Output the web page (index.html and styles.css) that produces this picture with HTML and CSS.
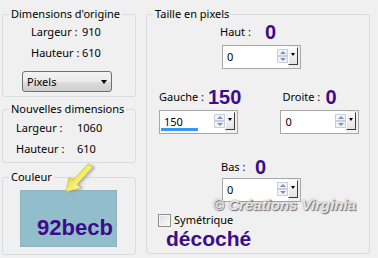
FILE: index.html
```html
<!DOCTYPE html>
<html lang="fr">
<head>
<meta charset="utf-8">
<title>Taille de la toile</title>
<link rel="stylesheet" href="styles.css">
</head>
<body>
<div class="dialog">
  <div class="leftcol">
    <fieldset class="grp g1">
      <legend>Dimensions d'origine</legend>
      <div class="orow r1"><span class="olab w51">Largeur :</span><span>910</span></div>
      <div class="orow r2"><span class="olab w47">Hauteur :</span><span>610</span></div>
      <div class="select"><span>Pixels</span><span class="caret"></span></div>
    </fieldset>
    <fieldset class="grp g2">
      <legend>Nouvelles dimensions</legend>
      <div class="ngrid">
        <span>Largeur :</span><span>1060</span>
        <span>Hauteur :</span><span>610</span>
      </div>
    </fieldset>
    <fieldset class="grp g3">
      <legend>Couleur</legend>
      <div class="swatch">92becb</div>
    </fieldset>
  </div>

  <fieldset class="grp right">
    <legend>Taille en pixels</legend>
    <div class="rbody">
      <div class="cell haut">
        <div class="lrow"><span class="lab lw45">Haut :</span><span class="big">0</span></div>
        <div class="spin sp2">
          <div class="field">0<div class="arrows"><span class="arr up"></span><span class="arr down"></span></div></div>
          <div class="side"><span class="btn"></span></div>
        </div>
      </div>

      <div class="pair">
        <div class="cell gauche">
          <div class="lrow"><span class="lab lw49">Gauche :</span><span class="big">150</span></div>
          <div class="spin">
            <div class="field">150<span class="bar"></span><div class="arrows"><span class="arr up"></span><span class="arr down"></span></div></div>
            <div class="side"><span class="btn"></span></div>
          </div>
        </div>
        <div class="cell droite">
          <div class="lrow lr2"><span class="lab lw43">Droite :</span><span class="big">0</span></div>
          <div class="spin">
            <div class="field">0<div class="arrows"><span class="arr up"></span><span class="arr down"></span></div></div>
            <div class="side"><span class="btn"></span></div>
          </div>
        </div>
      </div>

      <div class="cell bas">
        <div class="lrow"><span class="lab lw34">Bas :</span><span class="big">0</span></div>
        <div class="spin sp1">
          <div class="field">0<div class="arrows"><span class="arr up"></span><span class="arr down"></span></div></div>
          <div class="side"><span class="btn"></span></div>
        </div>
      </div>

      <div class="check"><span class="box"></span><span>Symétrique</span></div>
      <div class="state">décoché</div>

      <div class="watermark">© Créations Virginia</div>
    </div>
  </fieldset>

  <svg class="pointer" width="44" height="44" viewBox="0 0 44 44">
    <defs>
      <linearGradient id="yel" x1="0" y1="0" x2="0" y2="1">
        <stop offset="0" stop-color="#fdfab0"/>
        <stop offset="0.5" stop-color="#f4ee6c"/>
        <stop offset="1" stop-color="#e2d53a"/>
      </linearGradient>
      <filter id="blur" x="-30%" y="-30%" width="160%" height="160%">
        <feGaussianBlur stdDeviation="1.2"/>
      </filter>
    </defs>
    <g transform="translate(11,34) rotate(132.8)">
      <polygon points="0,0 -13,-8 -13,-2.8 -36,-2.8 -36,2.8 -13,2.8 -13,8" fill="#6e6e6e" opacity="0.45" filter="url(#blur)" transform="translate(-1.5,-2.5)"/>
      <polygon points="0,0 -13,-8 -13,-2.8 -36,-2.8 -36,2.8 -13,2.8 -13,8" fill="url(#yel)" stroke="#c3b735" stroke-width="0.6"/>
    </g>
  </svg>
</div>
</body>
</html>
```

FILE: styles.css
```css
body {
  margin: 0;
  background: #f0f0f0;
  font-family: "Noto Sans", sans-serif;
  font-size: 11px;
  line-height: 14px;
  color: #000;
}

.dialog {
  position: relative;
  display: flex;
  align-items: flex-start;
  gap: 10px;
  padding: 7px 0 0 2px;
}

.leftcol {
  width: 134px;
  display: flex;
  flex-direction: column;
}

.grp {
  margin: 0;
  padding: 0;
  min-width: 0;
  border: 1px solid #d8dcdf;
  border-radius: 3px;
}

.grp > legend {
  padding: 0 2px;
  margin-left: 6px;
  line-height: 14px;
}

/* Dimensions d'origine */
.g1 { padding-bottom: 4px; }
.orow { padding-left: 28px; height: 14px; white-space: nowrap; }
.r1 { margin-top: 4px; }
.r2 { margin-top: 7px; }
.olab { display: inline-block; }
.w51 { width: 51px; }
.w47 { width: 51px; }

.select {
  margin: 11px 0 0 19px;
  width: 90px;
  height: 21px;
  box-sizing: border-box;
  border: 1px solid #707070;
  border-radius: 3px;
  background: linear-gradient(#f3f3f3, #ebebeb 50%, #dddddd 50%, #cfcfcf);
  display: flex;
  align-items: center;
  justify-content: space-between;
  padding: 0 4px 0 4px;
}
.caret {
  width: 0;
  height: 0;
  border-left: 3.5px solid transparent;
  border-right: 3.5px solid transparent;
  border-top: 4px solid #000;
}

/* Nouvelles dimensions */
.g2 { margin-top: 5px; }
.ngrid {
  display: grid;
  grid-template-columns: 61px auto;
  row-gap: 7px;
  padding: 5px 0 6px 13px;
}

/* Couleur */
.g3 { margin-top: 7px; padding-bottom: 7px; }
.swatch {
  margin: 6px 0 0 17px;
  width: 97px;
  height: 57px;
  box-sizing: border-box;
  border: 1px solid #8fb3bf;
  background: #92becb;
  padding: 25px 0 0 16px;
  font-family: "Liberation Sans", Arial, sans-serif;
  font-weight: bold;
  font-size: 22px;
  line-height: 24px;
  color: #3d0c8a;
}

/* Taille en pixels */
.right {
  width: 224px;
  box-sizing: border-box;
  padding-bottom: 3px;
}
.rbody {
  position: relative;
  display: flex;
  flex-direction: column;
  align-items: flex-start;
}
.lrow {
  display: flex;
  align-items: center;
  height: 22px;
  white-space: nowrap;
}
.lab { display: inline-block; }
.lw45 { width: 45px; }
.lw49 { width: 49px; }
.lw43 { width: 43px; }
.lw34 { width: 34px; }
.big {
  font-family: "Liberation Sans", Arial, sans-serif;
  font-weight: bold;
  font-size: 20px;
  line-height: 22px;
  color: #3d0c8a;
}

.haut { margin-left: 73px; }
.sp2 { margin-left: 2px; }
.bas { margin-left: 74px; margin-top: 22px; }
.sp1 { margin-left: 1px; }

.pair {
  display: flex;
  gap: 39px;
  margin: 17px 0 0 12px;
}
.lr2 { margin-left: 2px; }

.spin {
  display: flex;
  width: 79px;
  height: 24px;
  box-sizing: border-box;
  border: 1px solid #a7a7a7;
  background: #fff;
  margin-top: 2px;
}
.bas .spin { margin-top: 0; }
.field {
  position: relative;
  flex: 1;
  display: flex;
  align-items: center;
  justify-content: space-between;
  padding-left: 4px;
}
.bar {
  position: absolute;
  left: 1px;
  top: 17px;
  width: 37px;
  height: 3px;
  background: #3399f4;
}
.arrows {
  display: flex;
  flex-direction: column;
  width: 11px;
  margin-top: -3px;
}
.arr {
  position: relative;
  height: 7px;
  box-sizing: border-box;
  border: 1px solid #c9ced8;
  background: #f2f4f8;
}
.arr::after {
  content: "";
  position: absolute;
  left: 1.5px;
  width: 0;
  height: 0;
  border-left: 3px solid transparent;
  border-right: 3px solid transparent;
}
.up::after { top: 1px; border-bottom: 3px solid #7d8fc4; }
.down::after { top: 1px; border-top: 3px solid #7d8fc4; }

.side {
  width: 12px;
  background: #f0f0f0;
  display: flex;
  align-items: flex-start;
}
.btn {
  position: relative;
  width: 10px;
  height: 18px;
  margin-top: 1px;
  box-sizing: border-box;
  border-top: 1px solid #fff;
  border-left: 1px solid #fff;
  border-right: 1px solid #3a3a3a;
  border-bottom: 1px solid #3a3a3a;
  background: linear-gradient(#fafafa, #e4e4e4);
}
.btn::after {
  content: "";
  position: absolute;
  left: 1.5px;
  top: 5px;
  width: 0;
  height: 0;
  border-left: 2.5px solid transparent;
  border-right: 2.5px solid transparent;
  border-top: 3px solid #000;
}

.check {
  display: flex;
  align-items: center;
  gap: 3px;
  height: 14px;
  margin: 11px 0 0 11px;
}
.box {
  width: 13px;
  height: 13px;
  box-sizing: border-box;
  border: 1px solid #8e8f8f;
  background: linear-gradient(135deg, #dcdcdc, #fbfbfb);
  box-shadow: inset 0 0 0 1px #f4f4f4;
}
.state {
  margin: 1px 0 0 19px;
  font-family: "Liberation Sans", Arial, sans-serif;
  font-weight: bold;
  font-size: 21px;
  line-height: 22px;
  color: #3d0c8a;
}

.watermark {
  position: absolute;
  left: 66px;
  top: 175px;
  font-family: "Liberation Sans", Arial, sans-serif;
  font-weight: bold;
  font-style: italic;
  font-size: 15px;
  line-height: 17px;
  color: #e6e6e6;
  text-shadow: 1px 1px 1px #6d6d6d, 0 0 2px #9a9a9a;
  white-space: nowrap;
}

.pointer {
  position: absolute;
  left: 55px;
  top: 158px;
}
```
